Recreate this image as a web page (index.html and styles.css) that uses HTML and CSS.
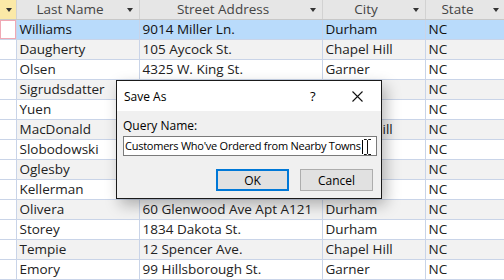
FILE: index.html
```html
<!DOCTYPE html>
<html lang="en">
<head>
<meta charset="UTF-8">
<title>Customers</title>
<link rel="stylesheet" href="styles.css">
</head>
<body>
<div class="sheet">
    <table class="grid">
        <colgroup>
            <col class="c-sel">
            <col class="c-last">
            <col class="c-street">
            <col class="c-city">
            <col class="c-state">
        </colgroup>
        <thead>
            <tr>
                <th class="sel-head"><span class="arrow"></span></th>
                <th><span class="label">Last Name</span><span class="arrow"></span></th>
                <th><span class="label">Street Address</span><span class="arrow"></span></th>
                <th><span class="label">City</span><span class="arrow"></span></th>
                <th><span class="label">State</span><span class="arrow"></span></th>
            </tr>
        </thead>
        <tbody>
            <tr class="current"><td class="sel"></td><td>Williams</td><td>9014 Miller Ln.</td><td>Durham</td><td>NC</td></tr>
            <tr><td class="sel"></td><td>Daugherty</td><td>105 Aycock St.</td><td>Chapel Hill</td><td>NC</td></tr>
            <tr><td class="sel"></td><td>Olsen</td><td>4325 W. King St.</td><td>Garner</td><td>NC</td></tr>
            <tr><td class="sel"></td><td>Sigrudsdatter</td><td></td><td></td><td>NC</td></tr>
            <tr><td class="sel"></td><td>Yuen</td><td></td><td></td><td>NC</td></tr>
            <tr><td class="sel"></td><td>MacDonald</td><td></td><td>Chapel Hill</td><td>NC</td></tr>
            <tr><td class="sel"></td><td>Slobodowski</td><td></td><td></td><td>NC</td></tr>
            <tr><td class="sel"></td><td>Oglesby</td><td></td><td></td><td>NC</td></tr>
            <tr><td class="sel"></td><td>Kellerman</td><td></td><td></td><td>NC</td></tr>
            <tr><td class="sel"></td><td>Olivera</td><td>60 Glenwood Ave Apt A121</td><td>Durham</td><td>NC</td></tr>
            <tr><td class="sel"></td><td>Storey</td><td>1834 Dakota St.</td><td>Durham</td><td>NC</td></tr>
            <tr><td class="sel"></td><td>Tempie</td><td>12 Spencer Ave.</td><td>Chapel Hill</td><td>NC</td></tr>
            <tr><td class="sel"></td><td>Emory</td><td>99 Hillsborough St.</td><td>Garner</td><td>NC</td></tr>
        </tbody>
    </table>

    <div class="dialog">
        <div class="dialog-title">
            <span class="title-text">Save As</span>
            <span class="help">?</span>
            <svg class="close" width="11" height="11" viewBox="0 0 11 11">
                <path d="M0.5 0.5 L10.5 10.5 M10.5 0.5 L0.5 10.5" stroke="#111" stroke-width="1.1" fill="none"/>
            </svg>
        </div>
        <div class="dialog-body">
            <label class="field-label">Query Name:</label>
            <div class="field"><span class="field-text">Customers Who've Ordered from Nearby Towns</span><span class="caret"></span>
                <svg class="ibeam" width="9" height="16" viewBox="0 0 9 16">
                    <path d="M1 0.5 H3.5 L4.5 1.5 L5.5 0.5 H8 M4.5 1.5 V14.5 M1 15.5 H3.5 L4.5 14.5 L5.5 15.5 H8" stroke="#111" stroke-width="1" fill="none"/>
                </svg>
            </div>
            <div class="buttons">
                <button class="btn default">OK</button>
                <button class="btn">Cancel</button>
            </div>
        </div>
    </div>
</div>
</body>
</html>
```

FILE: styles.css
```css
body {
    margin: 0;
    background: #fff;
    font-family: "Open Sans", "Liberation Sans", sans-serif;
    overflow: hidden;
}
.sheet {
    position: relative;
    width: 504px;
    height: 280px;
    overflow: hidden;
}

.grid {
    border-collapse: collapse;
    table-layout: fixed;
    width: 505px;
    font-size: 13.5px;
    color: #222;
}
.c-sel { width: 16px; }
.c-last { width: 123px; }
.c-street { width: 183px; }
.c-city { width: 103px; }
.c-state { width: 80px; }

.grid th {
    height: 19px;
    padding: 0;
    background: #e6e6e6;
    border-right: 1px solid #d2d2d2;
    border-bottom: 1px solid #c8c8c8;
    font-weight: normal;
    color: #444;
    position: relative;
    text-align: center;
    line-height: 19px;
}
.grid th .label {
    display: inline-block;
    padding-right: 15px;
}
.grid th .arrow {
    position: absolute;
    right: 6px;
    top: 8px;
    width: 0;
    height: 0;
    border-left: 3.5px solid transparent;
    border-right: 3.5px solid transparent;
    border-top: 4px solid #333;
}
.grid th.sel-head {
    background: #fbe9a7;
}
.grid th.sel-head .arrow {
    right: 4px;
}

.grid td {
    height: 19px;
    padding: 0 0 0 3px;
    border-right: 1px solid #c9d4e8;
    border-bottom: 1px solid #c9d4e8;
    white-space: nowrap;
    overflow: hidden;
    line-height: 19px;
}
.grid tbody tr:nth-child(even) td {
    background: #f2f2f2;
}
.grid tbody tr:nth-child(even) td.sel,
.grid td.sel {
    background: #fff;
    padding: 0;
}
.grid tr.current td {
    background: #b9dbfb;
    color: #111;
}
.grid tr.current td.sel {
    background: #fff;
    box-shadow: inset 0 0 0 1px #f0a8b4;
}

.dialog {
    position: absolute;
    left: 116px;
    top: 80px;
    width: 264px;
    height: 117px;
    border: 1px solid #1a1a1a;
    background: #f0f0f0;
    box-shadow: 4px 6px 14px rgba(0, 0, 0, 0.28);
    font-size: 12px;
    color: #000;
}
.dialog-title {
    height: 30px;
    background: #fff;
    display: flex;
    align-items: center;
    padding-left: 7px;
}
.title-text {
    flex: 1;
    font-size: 12px;
}
.help {
    width: 8px;
    font-size: 13px;
    margin-right: 34px;
}
.close {
    margin-right: 18px;
}
.dialog-body {
    padding: 7px 6px 0 6px;
}
.field-label {
    display: block;
    line-height: 16px;
    margin-bottom: 2px;
}
.field {
    position: relative;
    height: 18px;
    width: 251px;
    border: 1px solid #7a7a7a;
    background: #fff;
    line-height: 18px;
    padding-left: 1px;
    box-sizing: content-box;
    font-size: 11px;
    letter-spacing: -0.25px;
    white-space: nowrap;
}
.caret {
    display: inline-block;
    width: 1px;
    height: 14px;
    background: #000;
    vertical-align: middle;
    margin-left: 1px;
}
.ibeam {
    position: absolute;
    right: 4px;
    top: 2px;
}
.buttons {
    display: flex;
    justify-content: flex-end;
    gap: 11px;
    margin-top: 13px;
    padding-right: 2px;
}
.btn {
    width: 73px;
    height: 22px;
    background: #e1e1e1;
    border: 1px solid #adadad;
    font-family: "Open Sans", "Liberation Sans", sans-serif;
    font-size: 12px;
    padding: 0;
    color: #000;
}
.btn.default {
    border: 2px solid #0078d7;
}
```
